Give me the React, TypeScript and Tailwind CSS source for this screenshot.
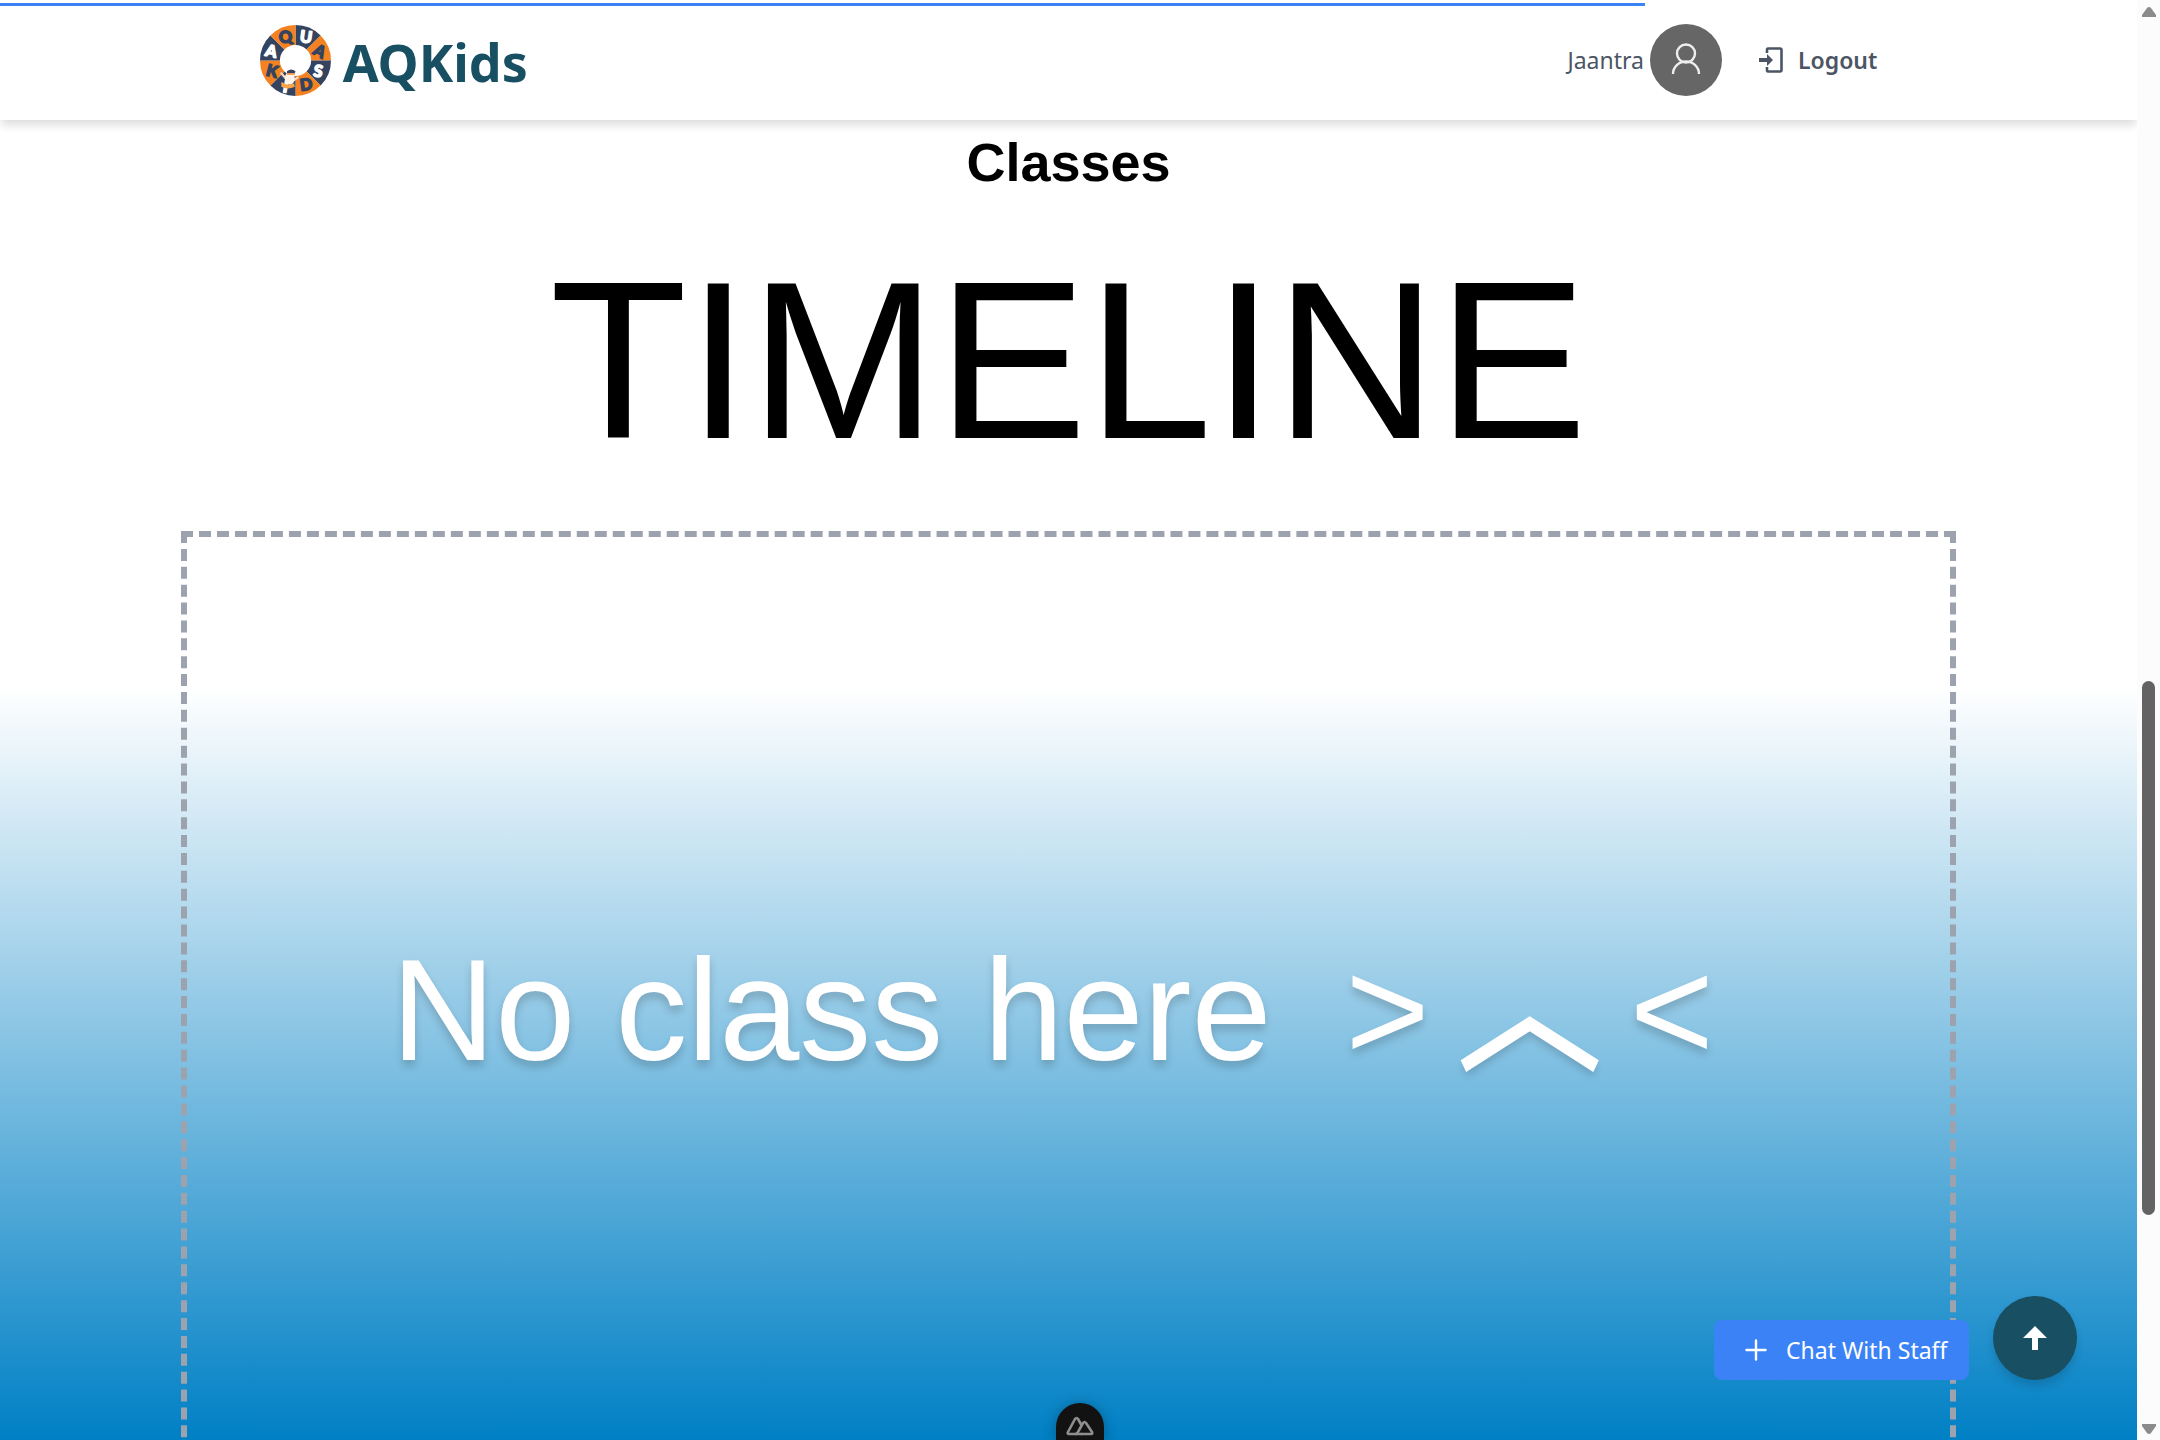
import React from "react";

const sectors = Array.from({ length: 8 }, (_, i) => i);

function point(r: number, deg: number) {
  const a = ((deg - 90) * Math.PI) / 180;
  return `${(50 + r * Math.cos(a)).toFixed(2)} ${(50 + r * Math.sin(a)).toFixed(2)}`;
}

const letters = [
  { c: "U", x: 65, y: 17, r: 8, dark: false },
  { c: "A", x: 84, y: 37, r: 28, dark: true },
  { c: "S", x: 82, y: 65, r: 10, dark: false },
  { c: "D", x: 65, y: 84, r: -8, dark: true },
  { c: "I", x: 36, y: 87, r: 10, dark: false },
  { c: "K", x: 17, y: 65, r: 14, dark: true },
  { c: "A", x: 16, y: 37, r: 12, dark: false },
  { c: "Q", x: 36, y: 17, r: -10, dark: true },
];

function Logo() {
  return (
    <svg viewBox="0 0 100 100" className="size-[71px]" aria-hidden="true">
      {sectors.map((i) => (
        <path
          key={i}
          d={`M${point(22, i * 45)} L${point(50, i * 45)} A50 50 0 0 1 ${point(50, i * 45 + 45)} L${point(22, i * 45 + 45)} A22 22 0 0 0 ${point(22, i * 45)}Z`}
          fill={i % 2 === 0 ? "#34435f" : "#f58220"}
        />
      ))}
      {letters.map((l, i) => (
        <text
          key={i}
          x={l.x}
          y={l.y + 8}
          textAnchor="middle"
          transform={`rotate(${l.r} ${l.x} ${l.y})`}
          fontSize="23"
          fontWeight="900"
          fontFamily="Lato, sans-serif"
          fill={l.dark ? "#34435f" : "#ffffff"}
          stroke={l.dark ? "#34435f" : "#ffffff"}
          strokeWidth="2"
          strokeLinejoin="round"
        >
          {l.c}
        </text>
      ))}
      <path d="M30 68l7 8M53 74l-9 6" stroke="#f8dcc4" strokeWidth="3" strokeLinecap="round" />
      <ellipse cx="42" cy="75" rx="7" ry="9" fill="#fff3e8" />
      <path d="M38 65q6-5 12 0l-1 3H38z" fill="#34435f" />
      <path d="M38 69h11" stroke="#f58220" strokeWidth="2" />
      <path d="M30 80q9 7 18 2l1 5q-10 5-19 0z" fill="#f9a34a" />
    </svg>
  );
}

function Header() {
  return (
    <header className="relative z-10 h-[120px] shrink-0 bg-white shadow-[0_6px_9px_-1px_rgba(0,0,0,0.14)]">
      <div className="absolute left-0 top-[3px] h-[3px] w-[77%] bg-[#3b82f6]" role="progressbar" aria-label="Loading" />
      <div className="mx-auto flex h-full w-[75.7%] items-center justify-between">
        <a href="#" className="flex items-center gap-3 text-[#184f63]">
          <Logo />
          <span className="pt-1 text-[52px] font-bold leading-[72px]">AQKids</span>
        </a>
        <nav className="flex items-center text-[23px] text-[#4b5563]">
          <a href="#" className="flex items-center gap-[6px]">
            <span>Jaantra</span>
            <svg viewBox="0 0 72 72" className="size-[72px]" aria-hidden="true">
              <circle cx="36" cy="36" r="36" fill="#666" />
              <g fill="none" stroke="#eee" strokeWidth="2.4">
                <circle cx="36" cy="29.5" r="9" />
                <path d="M23 50A13 12.500 0 0 1 49 50" />
              </g>
            </svg>
          </a>
          <button className="ml-9 flex items-center gap-[14px] font-semibold">
            <svg viewBox="0 0 26 26" className="size-[26px]" aria-hidden="true">
              <path d="M9 6V2.500Q9 1.500 10 1.500h12q1.500 0 1.500 1.500v20q0 1.500-1.500 1.500H10q-1 0-1-1V20" fill="none" stroke="currentColor" strokeWidth="2.6" />
              <path d="M1 11h8V7l6 6-6 6v-4H1z" fill="currentColor" />
            </svg>
            Logout
          </button>
        </nav>
      </div>
    </header>
  );
}

function Scrollbar() {
  return (
    <div className="relative flex w-[23px] shrink-0 flex-col items-center bg-[#fcfcfc]" aria-hidden="true">
      <svg viewBox="0 0 14 10" className="mt-[7px] h-[10px] w-[14px]">
        <path d="M7 0q1 0 2 1l5 7v2H0V8l5-7q1-1 2-1z" fill="#8b8b8b" />
      </svg>
      <div className="absolute top-[681px] h-[534px] w-[13px] rounded-full bg-[#636363]" />
      <svg viewBox="0 0 14 10" className="mb-[6px] mt-auto h-[10px] w-[14px]">
        <path d="M7 10q1 0 2-1l5-7V0H0v2l5 7q1 1 2 1z" fill="#8b8b8b" />
      </svg>
    </div>
  );
}

export default function App() {
  return (
    <div className="flex h-screen overflow-hidden bg-white font-['Noto_Sans','Open_Sans',sans-serif]">
      <div className="relative flex min-w-0 flex-1 flex-col overflow-hidden">
        <Header />
        <main className="flex min-h-0 flex-1 flex-col items-center bg-[linear-gradient(to_bottom,#ffffff_567px,#0080c5_1320px)] font-['Liberation_Sans','Noto_Sans_CJK_SC',sans-serif]">
          <h1 className="mt-[6px] text-[54px] font-bold leading-[72px] text-black">Classes</h1>
          <h2 className="mt-[34px] text-[225px] leading-[256px] text-black">TIMELINE</h2>
          <section className="mt-[43px] flex h-[960px] w-[83.1%] shrink-0 items-center justify-center border-[6px] border-dashed border-[#9ca3af] pr-8 text-[144px] leading-[144px] text-white">
            <p className="flex items-baseline gap-[28px] whitespace-nowrap [text-shadow:0_6px_9px_rgba(0,0,0,0.18)]">
              <span className="mr-[46px]">No class here</span>
              <span>&gt;</span>
              <span className="[-webkit-text-stroke:3px_white]">︿</span>
              <span>&lt;</span>
            </p>
          </section>
        </main>
        <button className="absolute bottom-[60px] right-[168px] flex h-[60px] w-[255px] items-center gap-[18px] rounded-lg bg-[#3b82f6] pl-[30px] text-[23px] text-white">
          <svg viewBox="0 0 24 24" className="size-6" fill="none" stroke="currentColor" strokeWidth="2.4" strokeLinecap="round" aria-hidden="true">
            <path d="M12 2.500v19M2.500 12h19" />
          </svg>
          <span className="whitespace-nowrap">Chat With Staff</span>
        </button>
        <button aria-label="Back to top" className="absolute bottom-[60px] right-[60px] flex size-[84px] items-center justify-center rounded-full bg-[#184f63] shadow-[0_6px_9px_rgba(0,0,0,0.14)]">
          <svg viewBox="0 0 24 24" className="size-6" aria-hidden="true">
            <path d="M12 0l12 12h-9v12H9V12H0z" fill="#fff" />
          </svg>
        </button>
      </div>
      <Scrollbar />
      <button aria-label="Developer tools" className="absolute bottom-0 left-1/2 flex h-[37px] w-12 -translate-x-1/2 items-start justify-center rounded-t-full bg-[#121212] pt-[13px] shadow-[0_2px_14px_rgba(0,0,0,0.3)]">
        <svg viewBox="0 0 28 20" className="h-5 w-7" fill="none" stroke="#8e8e8e" strokeWidth="2.6" strokeLinejoin="round" aria-hidden="true">
          <path d="M16 18H3q-2 0-1-2L9 3q1.500-2 3 0l4 7" />
          <path d="M15 18h10q2 0 1-2l-6-9q-1.500-2-3 0l-5 9q-1 2-3 2" />
        </svg>
      </button>
    </div>
  );
}
